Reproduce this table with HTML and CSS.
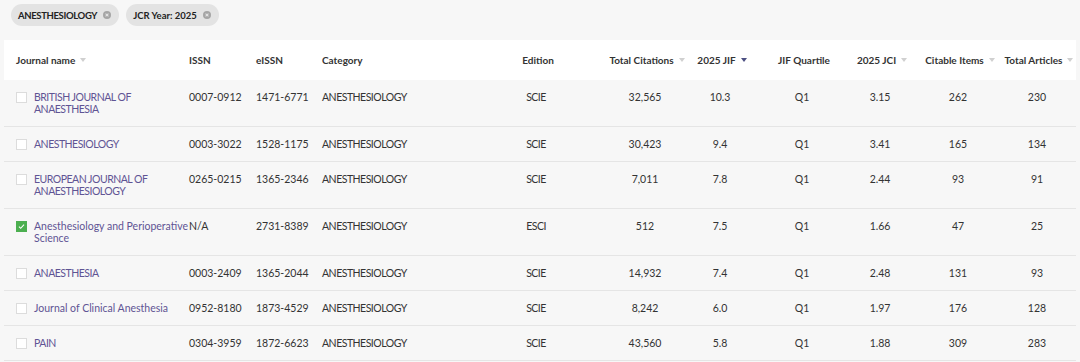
FILE: index.html
```html
<!DOCTYPE html>
<html lang="en">
<head>
    <meta charset="UTF-8">
    <title>JCR - Anesthesiology</title>
    <link rel="stylesheet" href="styles.css">
</head>
<body>
    <div class="filters">
        <span class="chip"><span class="caps">ANESTHESIOLOGY</span>
            <svg class="chip-x" viewBox="0 0 10 10"><circle cx="5" cy="5" r="5"/><path d="M3.2 3.2l3.6 3.6M6.8 3.2l-3.6 3.6"/></svg>
        </span>
        <span class="chip">JCR Year: 2025
            <svg class="chip-x" viewBox="0 0 10 10"><circle cx="5" cy="5" r="5"/><path d="M3.2 3.2l3.6 3.6M6.8 3.2l-3.6 3.6"/></svg>
        </span>
    </div>

    <table class="jcr">
        <colgroup>
            <col class="w-name"><col class="w-issn"><col class="w-eissn"><col class="w-cat">
            <col class="w-edition"><col class="w-tc"><col class="w-jif"><col class="w-q">
            <col class="w-jci"><col class="w-cit"><col class="w-art">
        </colgroup>
        <thead>
            <tr>
                <th class="name"><div class="th-in left">Journal name <i class="caret"></i></div></th>
                <th class="issn"><div class="th-in left">ISSN</div></th>
                <th><div class="th-in left">eISSN</div></th>
                <th><div class="th-in left">Category</div></th>
                <th><div class="th-in">Edition</div></th>
                <th><div class="th-in">Total Citations <i class="caret"></i></div></th>
                <th><div class="th-in">2025 JIF <i class="caret active"></i></div></th>
                <th><div class="th-in">JIF Quartile</div></th>
                <th><div class="th-in">2025 JCI <i class="caret"></i></div></th>
                <th><div class="th-in">Citable Items <i class="caret"></i></div></th>
                <th class="last"><div class="th-in">Total Articles <i class="caret"></i></div></th>
            </tr>
        </thead>
        <tbody>
            <tr>
                <td class="name"><div class="name-in"><span class="cb"></span><a href="#" class="caps">BRITISH JOURNAL OF ANAESTHESIA</a></div></td>
                <td class="issn">0007-0912</td><td>1471-6771</td><td class="caps">ANESTHESIOLOGY</td>
                <td class="c caps">SCIE</td><td class="c">32,565</td><td class="c">10.3</td><td class="c">Q1</td>
                <td class="c">3.15</td><td class="c">262</td><td class="c last">230</td>
            </tr>
            <tr>
                <td class="name"><div class="name-in"><span class="cb"></span><a href="#" class="caps">ANESTHESIOLOGY</a></div></td>
                <td class="issn">0003-3022</td><td>1528-1175</td><td class="caps">ANESTHESIOLOGY</td>
                <td class="c caps">SCIE</td><td class="c">30,423</td><td class="c">9.4</td><td class="c">Q1</td>
                <td class="c">3.41</td><td class="c">165</td><td class="c last">134</td>
            </tr>
            <tr>
                <td class="name"><div class="name-in"><span class="cb"></span><a href="#" class="caps">EUROPEAN JOURNAL OF ANAESTHESIOLOGY</a></div></td>
                <td class="issn">0265-0215</td><td>1365-2346</td><td class="caps">ANESTHESIOLOGY</td>
                <td class="c caps">SCIE</td><td class="c">7,011</td><td class="c">7.8</td><td class="c">Q1</td>
                <td class="c">2.44</td><td class="c">93</td><td class="c last">91</td>
            </tr>
            <tr>
                <td class="name"><div class="name-in"><span class="cb checked"><svg viewBox="0 0 11 11"><path d="M2.4 5.6l2.1 2.1 4.1-4.4"/></svg></span><a href="#">Anesthesiology and Perioperative Science</a></div></td>
                <td class="issn">N/A</td><td>2731-8389</td><td class="caps">ANESTHESIOLOGY</td>
                <td class="c caps">ESCI</td><td class="c">512</td><td class="c">7.5</td><td class="c">Q1</td>
                <td class="c">1.66</td><td class="c">47</td><td class="c last">25</td>
            </tr>
            <tr>
                <td class="name"><div class="name-in"><span class="cb"></span><a href="#" class="caps">ANAESTHESIA</a></div></td>
                <td class="issn">0003-2409</td><td>1365-2044</td><td class="caps">ANESTHESIOLOGY</td>
                <td class="c caps">SCIE</td><td class="c">14,932</td><td class="c">7.4</td><td class="c">Q1</td>
                <td class="c">2.48</td><td class="c">131</td><td class="c last">93</td>
            </tr>
            <tr>
                <td class="name"><div class="name-in"><span class="cb"></span><a href="#">Journal of Clinical Anesthesia</a></div></td>
                <td class="issn">0952-8180</td><td>1873-4529</td><td class="caps">ANESTHESIOLOGY</td>
                <td class="c caps">SCIE</td><td class="c">8,242</td><td class="c">6.0</td><td class="c">Q1</td>
                <td class="c">1.97</td><td class="c">176</td><td class="c last">128</td>
            </tr>
            <tr>
                <td class="name"><div class="name-in"><span class="cb"></span><a href="#" class="caps">PAIN</a></div></td>
                <td class="issn">0304-3959</td><td>1872-6623</td><td class="caps">ANESTHESIOLOGY</td>
                <td class="c caps">SCIE</td><td class="c">43,560</td><td class="c">5.8</td><td class="c">Q1</td>
                <td class="c">1.88</td><td class="c">309</td><td class="c last">283</td>
            </tr>
        </tbody>
    </table>
</body>
</html>
```

FILE: styles.css
```css
body {
    margin: 0;
    padding: 4px 4px 0;
    background: #f7f7f7;
    font-family: Lato, "Liberation Sans", sans-serif;
    font-size: 10.5px;
    color: #333;
}
.caps {
    letter-spacing: -0.5px;
}
.filters {
    display: flex;
    gap: 7px;
    padding-left: 7px;
    height: 22px;
}
.chip {
    display: inline-flex;
    align-items: center;
    gap: 6px;
    height: 22px;
    padding: 0 8px 0 7px;
    border-radius: 11px;
    background: #e3e3e3;
    font-size: 9.5px;
    font-weight: 700;
    color: #222;
}
.chip .caps {
    letter-spacing: -0.35px;
}
.chip-x {
    width: 8px;
    height: 8px;
}
.chip-x circle {
    fill: #a5a5a5;
}
.chip-x path {
    stroke: #e3e3e3;
    stroke-width: 1.3;
    fill: none;
}
.jcr {
    margin-top: 14px;
    width: 1072px;
    table-layout: fixed;
    border-collapse: collapse;
}
.w-name { width: 185px; }
.w-issn { width: 63px; }
.w-eissn { width: 66px; }
.w-cat { width: 166px; }
.w-edition { width: 104px; }
.w-tc { width: 114px; }
.w-jif { width: 36px; }
.w-q { width: 128px; }
.w-jci { width: 28px; }
.w-cit { width: 128px; }
.w-art { width: 54px; }
thead th {
    background: #fff;
    height: 40px;
    padding: 0 0 0 4px;
    font-size: 10px;
    font-weight: 700;
    color: #333;
    text-align: left;
}
.th-in {
    display: flex;
    align-items: center;
    justify-content: center;
    gap: 5px;
    white-space: nowrap;
}
.th-in.left {
    justify-content: flex-start;
}
th.name, td.name {
    padding-left: 12px;
}
th.issn, td.issn {
    padding-left: 0;
}
th.last, td.last {
    padding-right: 24px;
}
.caret {
    display: inline-block;
    width: 0;
    height: 0;
    border-left: 3.5px solid transparent;
    border-right: 3.5px solid transparent;
    border-top: 4px solid #d0d0d0;
}
.caret.active {
    border-top-color: #4b4f82;
}
tbody td {
    padding: 11px 0 11px 4px;
    line-height: 12px;
    vertical-align: top;
    border-bottom: 1px solid #e5e5e5;
    color: #333;
}
tbody td.c {
    padding-left: 0;
    text-align: center;
}
.name-in {
    display: flex;
    align-items: flex-start;
}
.cb {
    flex: none;
    width: 11px;
    height: 11px;
    margin: 1px 7px 0 0;
    box-sizing: border-box;
    border: 1px solid #dcdcdc;
    background: #fff;
}
.cb.checked {
    border-color: #4caf50;
    background: #4caf50;
}
.cb svg {
    display: block;
    width: 9px;
    height: 9px;
}
.cb svg path {
    stroke: #fff;
    stroke-width: 1.3;
    fill: none;
}
.name-in a {
    color: #5f5494;
    text-decoration: none;
}
```
